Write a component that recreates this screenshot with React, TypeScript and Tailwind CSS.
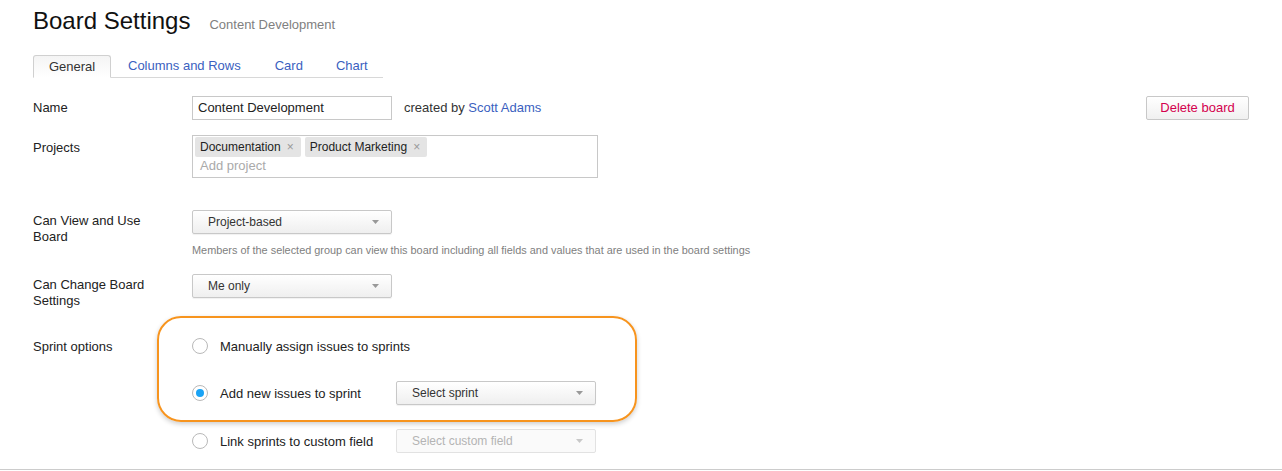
import React from "react";

const font = { fontFamily: '"Liberation Sans", Arial, sans-serif' };

function Select({ label, disabled = false, width = "w-[200px]" }: { label: string; disabled?: boolean; width?: string }) {
  return (
    <div
      className={`${width} h-[24px] flex items-center justify-between pl-[15px] pr-[12px] rounded-[2px] border text-[12px] ${
        disabled
          ? "border-[#e2e2e2] bg-[#fafafa] text-[#b4b4b4]"
          : "border-[#c8c8c8] bg-gradient-to-b from-[#ffffff] to-[#efefef] text-[#333] shadow-[0_1px_1px_rgba(0,0,0,0.06)]"
      }`}
    >
      <span>{label}</span>
      <svg width="7" height="4" viewBox="0 0 7 4">
        <path d="M0 0 L7 0 L3.5 4 Z" fill={disabled ? "#c8c8c8" : "#999"} />
      </svg>
    </div>
  );
}

function Radio({ checked = false }: { checked?: boolean }) {
  return (
    <div className="w-[16px] h-[16px] rounded-full border border-[#b9b9b9] bg-white flex items-center justify-center shrink-0">
      {checked && <div className="w-[8px] h-[8px] rounded-full bg-[#1aa3f5]" />}
    </div>
  );
}

function Tag({ label }: { label: string }) {
  return (
    <div className="h-[20px] flex items-center gap-[6px] pl-[5px] pr-[7px] bg-[#e4e4e4] rounded-[2px] text-[12px] text-[#222]">
      <span>{label}</span>
      <span className="text-[#999] text-[12px]">×</span>
    </div>
  );
}

export default function App() {
  return (
    <div className="w-[1282px] h-[471px] bg-white text-[#333] overflow-hidden" style={font}>
      <div className="border-b border-[#cccccc] h-[470px]">
        <div className="pl-[33px] pr-[33px]">
          {/* Title */}
          <div className="pt-[7px] flex items-baseline">
            <h1 className="text-[24px] leading-[28px] text-[#111]">Board Settings</h1>
            <span className="ml-[19px] text-[13px] text-[#808080]">Content Development</span>
          </div>

          {/* Tabs */}
          <div className="mt-[20px] w-[350px] h-[23px] flex items-end border-b border-[#d8d8d8] text-[13px]">
            <div className="h-[23px] w-[78px] -mb-px flex items-center justify-center border border-[#d0d0d0] border-b-white rounded-t-[3px] bg-gradient-to-b from-[#f4f4f4] to-[#ffffff] text-[#333]">
              General
            </div>
            <div className="h-[22px] flex items-center ml-[17px] text-[#3b5fc0]">Columns and Rows</div>
            <div className="h-[22px] flex items-center ml-[34px] text-[#3b5fc0]">Card</div>
            <div className="h-[22px] flex items-center ml-[33px] text-[#3b5fc0]">Chart</div>
          </div>

          {/* Name */}
          <div className="mt-[18px] flex items-center h-[24px] text-[13px]">
            <div className="w-[159px] text-[#222]">Name</div>
            <div className="w-[200px] h-[24px] border border-[#c8c8c8] flex items-center pl-[5px] text-[13px] text-[#222]">
              Content Development
            </div>
            <div className="ml-[12px] text-[#333]">
              created by <span className="text-[#3b5fc0]">Scott Adams</span>
            </div>
            <div className="ml-auto w-[103px] h-[24px] flex items-center justify-center border border-[#c8c8c8] rounded-[2px] bg-gradient-to-b from-[#ffffff] to-[#f0f0f0] text-[13px] text-[#d4004e]">
              Delete board
            </div>
          </div>

          {/* Projects */}
          <div className="mt-[15px] flex text-[13px]">
            <div className="w-[159px] pt-[3px] text-[#222]">Projects</div>
            <div className="w-[406px] h-[43px] border border-[#c8c8c8] pt-[1px] pl-[2px]">
              <div className="flex gap-[4px]">
                <Tag label="Documentation" />
                <Tag label="Product Marketing" />
              </div>
              <div className="pl-[5px] pt-[1px] leading-[16px] text-[#aaaaaa] text-[13px]">Add project</div>
            </div>
          </div>

          {/* Can View */}
          <div className="mt-[32px] flex text-[13px]">
            <div className="w-[159px] pt-[3px] leading-[16px] text-[#222]">
              Can View and Use
              <br />
              Board
            </div>
            <div>
              <Select label="Project-based" />
              <div className="mt-[8px] text-[10.9px] text-[#808080]">
                Members of the selected group can view this board including all fields and values that are used in the board settings
              </div>
            </div>
          </div>

          {/* Can Change */}
          <div className="mt-[16px] flex text-[13px]">
            <div className="w-[159px] pt-[3px] leading-[16px] text-[#222]">
              Can Change Board
              <br />
              Settings
            </div>
            <Select label="Me only" />
          </div>

          {/* Sprint options */}
          <div className="relative mt-[28px] flex text-[13px]">
            <div className="w-[159px] text-[#222]">Sprint options</div>
            <div className="flex flex-col">
              <div className="h-[18px] flex items-center">
                <Radio />
                <span className="ml-[12px] text-[#222]">Manually assign issues to sprints</span>
              </div>
              <div className="mt-[29px] h-[18px] flex items-center">
                <Radio checked />
                <span className="ml-[12px] w-[176px] text-[#222]">Add new issues to sprint</span>
                <Select label="Select sprint" />
              </div>
              <div className="mt-[30px] h-[18px] flex items-center">
                <Radio />
                <span className="ml-[12px] w-[176px] text-[#222]">Link sprints to custom field</span>
                <Select label="Select custom field" disabled />
              </div>
            </div>
            <div className="absolute left-[124px] top-[-21px] w-[480px] h-[106px] rounded-[24px] border-2 border-[#f7941e] shadow-[0_2px_5px_rgba(0,0,0,0.2)] pointer-events-none" />
          </div>
        </div>
      </div>
    </div>
  );
}
